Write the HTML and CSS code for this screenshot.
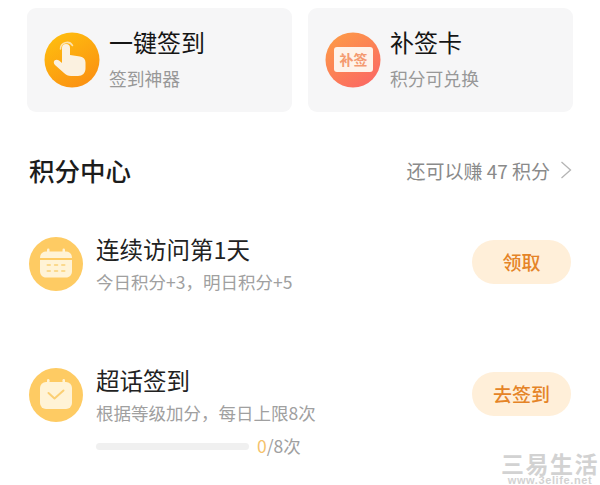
FILE: index.html
```html
<!DOCTYPE html>
<html lang="zh-CN">
<head>
    <meta charset="UTF-8">
    <title>积分中心</title>
    <link rel="stylesheet" href="styles.css">
</head>
<body>
    <div class="cards">
        <div class="card">
            <svg class="card-icon" viewBox="0 0 56 56">
                <defs>
                    <linearGradient id="orange" x1="0" y1="0" x2="0.6" y2="1">
                        <stop offset="0" stop-color="#ffc20e"/>
                        <stop offset="1" stop-color="#fb9312"/>
                    </linearGradient>
                </defs>
                <circle cx="28" cy="28" r="27.5" fill="url(#orange)"/>
                <path d="M16.500 17a6.500 6.500 0 0 1 12-3.500" fill="none" stroke="#fde3ad" stroke-width="1.500" stroke-linecap="round"/>
                <path d="M18 16a4 4 0 0 1 8 0v7l10 1.500c3.500 .5 5.500 2.500 5.500 6v6c0 4.500-3 7.500-7.500 7.500h-7c-3 0-5-1-7-3l-9-8c-1.500-1.500-1.500-3.500-.5-4.500s3-1.200 4.500 0l3 2.500z" fill="#fbf1e0"/>
            </svg>
            <div class="card-text">
                <div class="card-title">一键签到</div>
                <div class="card-sub">签到神器</div>
            </div>
        </div>
        <div class="card">
            <svg class="card-icon" viewBox="0 0 56 56">
                <defs>
                    <linearGradient id="coral" x1="0" y1="0" x2="0.7" y2="1">
                        <stop offset="0" stop-color="#fd9f45"/>
                        <stop offset="1" stop-color="#fb6a62"/>
                    </linearGradient>
                </defs>
                <circle cx="28" cy="28" r="27.5" fill="url(#coral)"/>
                <rect x="9" y="15" width="39" height="25" rx="3" fill="#fef3ea"/>
                <text x="28.500" y="33" text-anchor="middle" class="card-icon-label">补签</text>
            </svg>
            <div class="card-text">
                <div class="card-title">补签卡</div>
                <div class="card-sub">积分可兑换</div>
            </div>
        </div>
    </div>

    <div class="section-head">
        <h2>积分中心</h2>
        <div class="section-more">
            <span>还可以赚 47 积分</span>
            <svg class="chevron" viewBox="0 0 12 18"><path d="M1.500 1l9 8-9 8" fill="none" stroke="#b4b4b4" stroke-width="1.300"/></svg>
        </div>
    </div>

    <div class="task task-first">
        <svg class="task-icon" viewBox="0 0 54 54">
            <circle cx="27" cy="27" r="27" fill="#fecb63"/>
            <path d="M11 21c0-4 2.500-6.500 6-6.500h20c3.500 0 6 2.500 6 6.500z" fill="#fff3d6"/>
            <path d="M11 23h32v11c0 4-2.500 6.500-6 6.500H17c-3.500 0-6-2.500-6-6.500z" fill="#fff3d6"/>
            <rect x="18" y="11.500" width="2.500" height="5" rx="1.200" fill="#fff3d6"/>
            <rect x="33.500" y="11.500" width="2.500" height="5" rx="1.200" fill="#fff3d6"/>
            <g fill="#fbd98c">
                <rect x="17.500" y="27" width="4.500" height="2" rx="1"/>
                <rect x="24.800" y="27" width="4.500" height="2" rx="1"/>
                <rect x="32" y="27" width="4.500" height="2" rx="1"/>
                <rect x="17.500" y="33" width="4.500" height="2" rx="1"/>
                <rect x="24.800" y="33" width="4.500" height="2" rx="1"/>
                <rect x="32" y="33" width="4.500" height="2" rx="1"/>
            </g>
        </svg>
        <div class="task-text">
            <div class="task-title">连续访问第1天</div>
            <div class="task-sub">今日积分+3，明日积分+5</div>
        </div>
        <div class="task-btn">领取</div>
    </div>

    <div class="task task-second">
        <svg class="task-icon" viewBox="0 0 54 54">
            <circle cx="27" cy="27" r="27" fill="#fecb63"/>
            <rect x="11" y="14" width="32" height="27" rx="6" fill="#fff3d6"/>
            <rect x="18" y="11" width="2.500" height="5" rx="1.200" fill="#fff3d6"/>
            <rect x="33.500" y="11" width="2.500" height="5" rx="1.200" fill="#fff3d6"/>
            <path d="M19.500 25l6 5.500 9-8" fill="none" stroke="#fbcf73" stroke-width="2" stroke-linecap="round" stroke-linejoin="round"/>
        </svg>
        <div class="task-text">
            <div class="task-title">超话签到</div>
            <div class="task-sub">根据等级加分，每日上限8次</div>
            <div class="progress-row">
                <div class="progress"></div>
                <div class="progress-count"><span class="progress-done">0</span>/8次</div>
            </div>
        </div>
        <div class="task-btn">去签到</div>
    </div>

    <div class="watermark">
        <div class="watermark-name">三易生活</div>
        <div class="watermark-url">www.3elife.net</div>
    </div>
</body>
</html>
```

FILE: styles.css
```css
html, body {
    height: 485px;
    overflow: hidden;
}
body {
    position: relative;
    margin: 0;
    background: #fff;
    font-family: "Noto Sans CJK SC", "Liberation Sans", sans-serif;
    color: #1c1c1c;
}
.cards {
    display: flex;
    gap: 16px;
    padding: 8px 27px 0;
}
.card {
    flex: 1;
    display: flex;
    align-items: center;
    gap: 9px;
    height: 104px;
    padding-left: 17px;
    box-sizing: border-box;
    background: #f6f6f7;
    border-radius: 9px;
}
.card-icon {
    width: 56px;
    height: 56px;
    flex: none;
}
.card-icon-label {
    font-size: 14px;
    font-weight: 700;
    fill: #f49a70;
}
.card-text {
    padding-bottom: 3px;
}
.card-title {
    font-size: 24px;
    line-height: 30px;
    color: #151515;
}
.card-sub {
    margin-top: 9px;
    font-size: 17.800px;
    line-height: 24px;
    color: #989898;
}
.section-head {
    display: flex;
    align-items: center;
    justify-content: space-between;
    margin-top: 42px;
    padding: 0 28px 0 29px;
}
h2 {
    margin: 0;
    font-size: 25.500px;
    line-height: 32px;
    font-weight: 500;
}
.section-more {
    display: flex;
    align-items: center;
    gap: 10px;
    font-size: 19px;
    color: #8a8a8a;
}
.chevron {
    width: 12px;
    height: 18px;
}
.task {
    display: flex;
    align-items: flex-start;
    padding: 0 29px;
}
.task-first {
    margin-top: 48px;
}
.task-second {
    margin-top: 71px;
}
.task-icon {
    width: 54px;
    height: 54px;
    flex: none;
    margin-top: 3px;
}
.task-text {
    flex: 1;
    margin-left: 13px;
}
.task-title {
    font-size: 23.500px;
    line-height: 30px;
    color: #222;
}
.task-sub {
    margin-top: 6px;
    font-size: 17.500px;
    line-height: 24px;
    color: #a0a0a0;
}
.task-btn {
    width: 99px;
    height: 44px;
    line-height: 44px;
    margin-top: 6px;
    text-align: center;
    border-radius: 22px;
    background: #ffefd9;
    color: #e58427;
    font-size: 19px;
    font-weight: 500;
}
.task-second .task-btn {
    margin-top: 7px;
}
.progress-row {
    display: flex;
    align-items: center;
    gap: 8px;
    margin-top: 9px;
}
.progress {
    width: 153px;
    height: 7px;
    background: #f0f0f0;
    border-radius: 4px;
}
.progress-count {
    font-size: 17.500px;
    line-height: 24px;
    color: #a0a0a0;
}
.progress-done {
    color: #f5c26b;
}
.watermark {
    position: absolute;
    right: 0;
    bottom: 0;
    width: 100px;
    text-align: center;
    white-space: nowrap;
    color: #d2d2d2;
}
.watermark-name {
    font-size: 23px;
    line-height: 22px;
    margin-bottom: 1px;
    font-weight: 700;
    letter-spacing: 1.500px;
}
.watermark-url {
    font-family: "Liberation Sans", sans-serif;
    font-size: 11px;
    line-height: 10px;
    font-weight: 700;
    letter-spacing: 0.600px;
}
```
